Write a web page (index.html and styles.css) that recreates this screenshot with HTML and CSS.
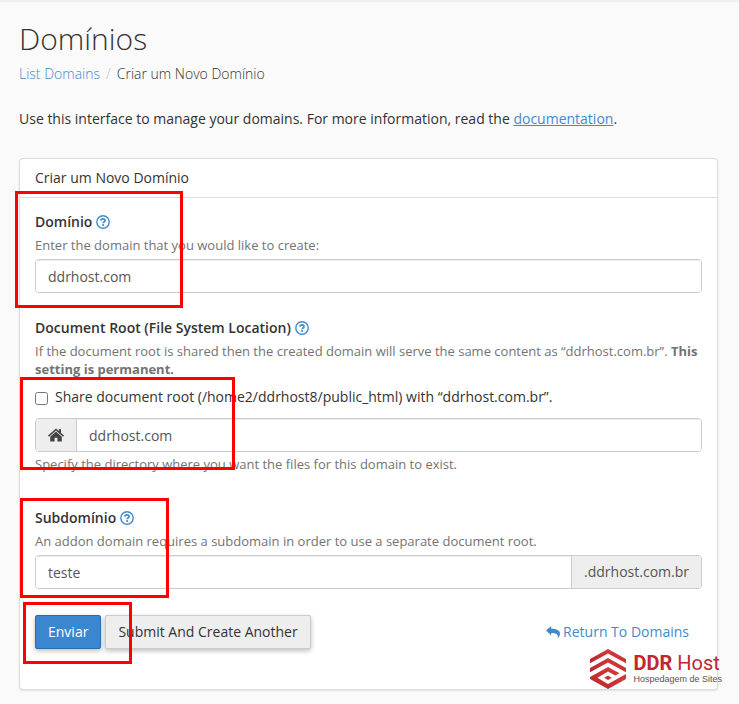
FILE: index.html
```html
<!DOCTYPE html>
<html lang="pt-BR">
<head>
    <meta charset="UTF-8">
    <meta name="viewport" content="width=device-width, initial-scale=1.0">
    <title>Domínios</title>
    <link rel="stylesheet" href="styles.css">
</head>
<body>
    <svg class="sprite" aria-hidden="true">
        <symbol id="icon-help" viewBox="0 0 14 14">
            <circle cx="7" cy="7" r="6.200" fill="none" stroke="currentColor" stroke-width="1.400"/>
            <path d="M4.900 5.600C5 4.300 5.900 3.800 7 3.800c1.200 0 2.100.6 2.100 1.700 0 1.400-2 1.500-2 2.700" fill="none" stroke="currentColor" stroke-width="1.700"/>
            <circle cx="7.100" cy="10" r="1.100" fill="currentColor"/>
        </symbol>
    </svg>

    <main class="page">
        <h1>Domínios</h1>
        <nav class="breadcrumb">
            <a href="#">List Domains</a>
            <span class="separator">/</span>
            <span>Criar um Novo Domínio</span>
        </nav>
        <p class="intro">Use this interface to manage your domains. For more information, read the <a href="#">documentation</a>.</p>

        <form class="panel">
            <h2 class="panel-heading">Criar um Novo Domínio</h2>
            <div class="panel-body">
                <div class="form-group">
                    <div class="label-row">
                        <label for="domain">Domínio</label>
                        <svg class="help-icon"><use href="#icon-help"/></svg>
                    </div>
                    <p class="help">Enter the domain that you would like to create:</p>
                    <div class="input-group">
                        <input type="text" id="domain" value="ddrhost.com">
                    </div>
                    <div class="highlight highlight-domain"></div>
                </div>

                <div class="form-group">
                    <div class="label-row">
                        <label for="docroot">Document Root (File System Location)</label>
                        <svg class="help-icon"><use href="#icon-help"/></svg>
                    </div>
                    <p class="help">If the document root is shared then the created domain will serve the same content as “ddrhost.com.br”. <strong>This setting is permanent.</strong></p>
                    <div class="docroot">
                        <div class="checkbox">
                            <input type="checkbox" id="share">
                            <label for="share">Share document root (/home2/ddrhost8/public_html) with “ddrhost.com.br”.</label>
                        </div>
                        <div class="input-group">
                            <span class="addon">
                                <svg class="home-icon" viewBox="0 0 16 14">
                                    <path d="M8 .5 10.800 3V1.200h2.200v3.700l3 2.700-1 1.100L8 2.600 1 8.700 0 7.600z"/>
                                    <path d="M8 3.600 13.800 8.700v4.800H9.400V9.800H6.600v3.700H2.200V8.700z"/>
                                </svg>
                            </span>
                            <input type="text" id="docroot" value="ddrhost.com">
                        </div>
                        <div class="highlight highlight-docroot"></div>
                    </div>
                    <p class="help help-after">Specify the directory where you want the files for this domain to exist.</p>
                </div>

                <div class="form-group">
                    <div class="label-row">
                        <label for="subdomain">Subdomínio</label>
                        <svg class="help-icon"><use href="#icon-help"/></svg>
                    </div>
                    <p class="help">An addon domain requires a subdomain in order to use a separate document root.</p>
                    <div class="input-group">
                        <input type="text" id="subdomain" value="teste">
                        <span class="addon">.ddrhost.com.br</span>
                    </div>
                    <div class="highlight highlight-subdomain"></div>
                </div>

                <div class="actions">
                    <div class="submit">
                        <button type="submit" class="btn btn-primary">Enviar</button>
                        <div class="highlight highlight-submit"></div>
                    </div>
                    <button type="button" class="btn">Submit And Create Another</button>
                    <a class="return" href="#">
                        <svg class="return-icon" viewBox="0 0 14 12">
                            <path d="M0 4.600 5.200 0v2.700c5.500 0 8.800 1.500 8.800 5 0 1.800-.9 3.200-2.300 4.300.9-3.500-1.200-5-6.500-5v2.400z"/>
                        </svg>
                        Return To Domains
                    </a>
                </div>
            </div>

            <div class="brand">
                <svg class="brand-mark" viewBox="0 0 36 40">
                    <defs>
                        <linearGradient id="red" x1="0" x2="1" y1="1" y2="0">
                            <stop offset="0" stop-color="#b3282d"/>
                            <stop offset="1" stop-color="#e03c3c"/>
                        </linearGradient>
                    </defs>
                    <g fill="url(#red)">
                        <path d="M0 10 18 0l18 10v4.300L18 4.500 0 14.300z"/>
                        <path d="M0 19 18 9l18 10v4.300L18 13.500 0 23.300z"/>
                        <path d="M0 28 18 18l11.500 6.200-4.200 2.300L18 22.500 7.500 28.800 18 35l18-10v5L18 40 0 30z"/>
                        <path d="M14.200 28.800 18 26.500l3.800 2.300L18 31z"/>
                    </g>
                </svg>
                <div class="brand-text">
                    <div class="brand-name"><b>DDR</b> Host</div>
                    <div class="brand-tagline">Hospedagem de Sites</div>
                </div>
            </div>
        </form>
    </main>
</body>
</html>
```
FILE: styles.css
```css
* {
    box-sizing: border-box;
}
body {
    margin: 0;
    border-top: 2px solid #f0f0f0;
    background: #fafafa;
    color: #333;
    font-family: "Open Sans", sans-serif;
    font-size: 14px;
    line-height: 20px;
}
h1, h2, p {
    margin: 0;
}
a {
    color: #428bca;
}
.sprite {
    display: none;
}
.page {
    padding: 17px 21px 14px 19px;
}
h1 {
    font-size: 30px;
    font-weight: 300;
    line-height: 40px;
}
.breadcrumb {
    display: flex;
    gap: 6px;
    margin-top: 5px;
    font-weight: 300;
}
.breadcrumb a {
    text-decoration: none;
}
.separator {
    color: #bbb;
}
.intro {
    margin: 25px 0 29px;
}

/* form panel */
.panel {
    position: relative;
    background: #fff;
    border: 1px solid #ddd;
    border-radius: 4px;
    box-shadow: 0 1px 2px rgba(0, 0, 0, 0.1);
}
.panel-heading {
    padding: 9px 15px;
    border-bottom: 1px solid #ddd;
    font-size: 14px;
    font-weight: 400;
}
.panel-body {
    padding: 14px 15px 40px;
}
.form-group {
    position: relative;
    margin-bottom: 25px;
}
.label-row {
    display: flex;
    align-items: center;
    gap: 4px;
    margin-bottom: 4px;
    font-weight: 600;
}
.help-icon {
    width: 14px;
    height: 14px;
    color: #428bca;
}
.help {
    margin-bottom: 5px;
    color: #737373;
    font-size: 13px;
    line-height: 18px;
}
.help-after {
    margin: 3px 0 35px;
}
.docroot {
    position: relative;
    margin-top: 9px;
}
.checkbox {
    display: flex;
    align-items: center;
    gap: 7px;
    margin-bottom: 11px;
}
.checkbox input {
    width: 13px;
    height: 13px;
    margin: 2px 0 0;
}
.input-group {
    display: flex;
    height: 34px;
    border: 1px solid #ccc;
    border-radius: 4px;
    overflow: hidden;
}
.input-group input {
    flex: 1;
    min-width: 0;
    padding: 2px 12px 0;
    border: 0;
    background: #fff;
    box-shadow: inset 0 1px 1px rgba(0, 0, 0, 0.08);
    color: #555;
    font: inherit;
}
.addon {
    display: flex;
    align-items: center;
    padding: 0 12px;
    background: #eee;
    color: #555;
}
.addon:first-child {
    border-right: 1px solid #ccc;
}
.addon:last-child {
    border-left: 1px solid #ccc;
}
.home-icon {
    width: 16px;
    height: 14px;
    fill: #444;
}

/* buttons */
.actions {
    display: flex;
    align-items: center;
    gap: 4px;
    margin-top: 26px;
}
.submit {
    position: relative;
}
.btn {
    display: block;
    height: 34px;
    padding: 0 12px;
    border: 1px solid #ccc;
    border-radius: 2px;
    background: #eee;
    box-shadow: 0 2px 5px rgba(0, 0, 0, 0.26);
    color: #333;
    font: inherit;
}
.btn-primary {
    border-color: #2a6daf;
    background: #3a87cf;
    color: #fff;
}
.return {
    display: flex;
    align-items: center;
    gap: 3px;
    margin-left: auto;
    padding-right: 13px;
    text-decoration: none;
}
.return-icon {
    width: 14px;
    height: 12px;
    fill: #428bca;
}

/* red marks around the steps */
.highlight {
    position: absolute;
    border: 3px solid #f00;
    pointer-events: none;
}
.highlight-domain {
    top: -21px;
    left: -20px;
    width: 168px;
    height: 117px;
}
.highlight-docroot {
    top: -10px;
    left: -15px;
    width: 215px;
    height: 93px;
}
.highlight-subdomain {
    top: -10px;
    left: -15px;
    width: 149px;
    height: 100px;
}
.highlight-submit {
    top: -13px;
    left: -12px;
    width: 109px;
    height: 62px;
}

/* logo in the panel corner */
.brand {
    position: absolute;
    right: -5px;
    bottom: 0;
    display: flex;
    gap: 7px;
}
.brand-mark {
    width: 36px;
    height: 40px;
}
.brand-text {
    padding-top: 3px;
    white-space: nowrap;
}
.brand-name {
    color: #c1272d;
    font-family: Roboto, sans-serif;
    font-size: 20px;
    font-weight: 400;
    line-height: 22px;
}
.brand-name b {
    font-weight: 700;
}
.brand-tagline {
    color: #555;
    font-family: "Liberation Sans", sans-serif;
    font-size: 9px;
    line-height: 10px;
}
```
